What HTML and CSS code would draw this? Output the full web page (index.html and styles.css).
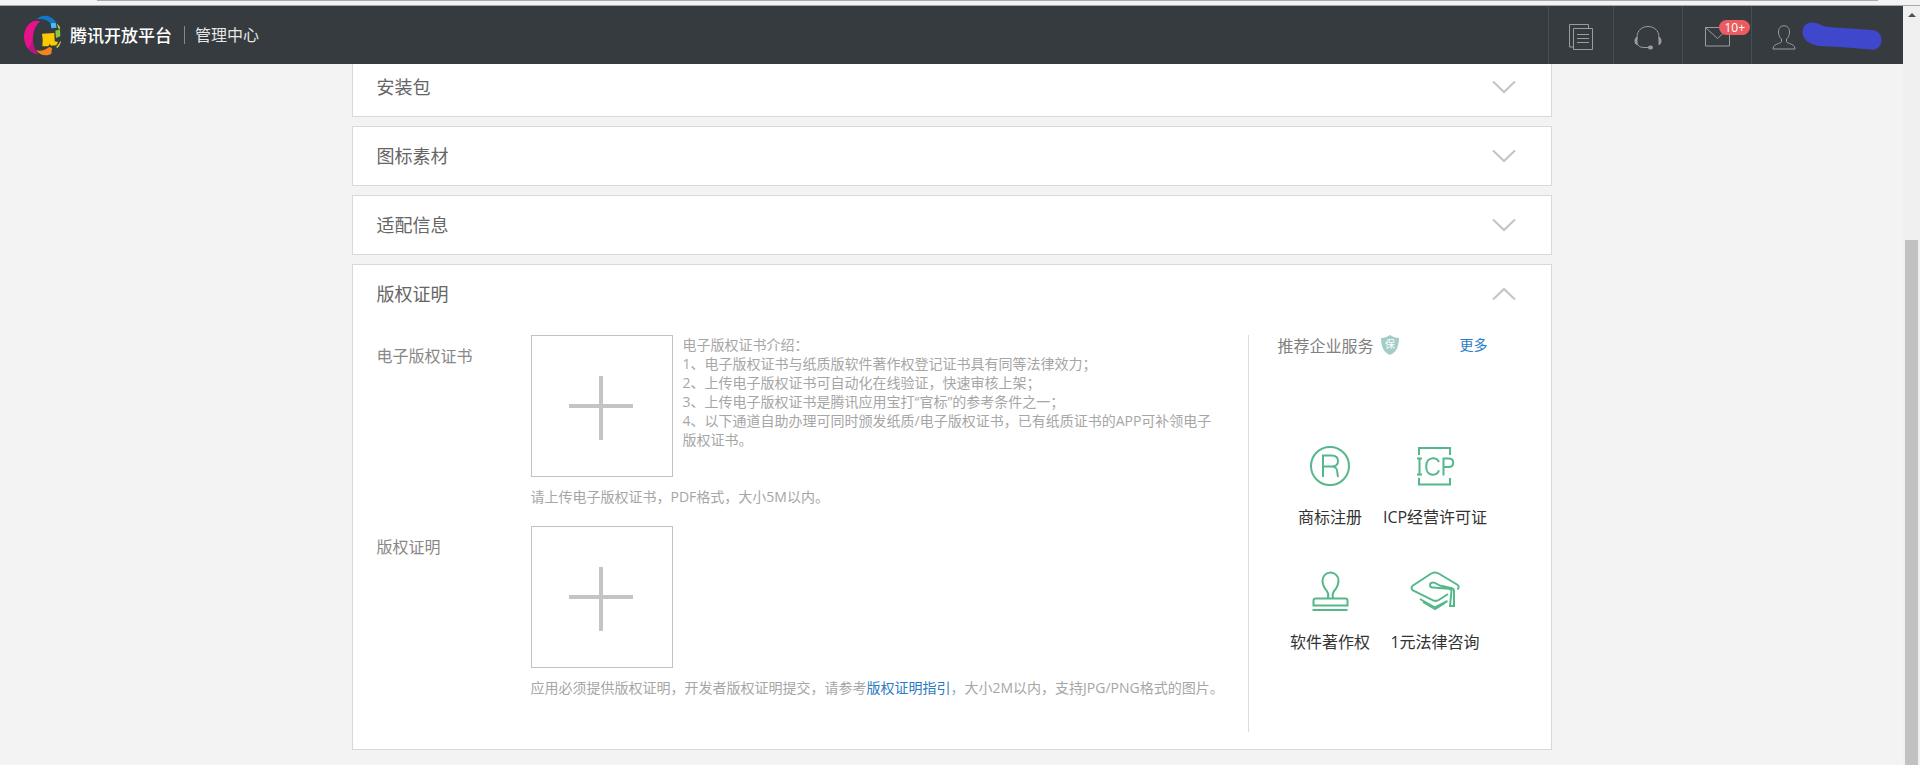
FILE: index.html
```html
<!DOCTYPE html>
<html lang="zh-CN">
<head>
<meta charset="utf-8">
<title>腾讯开放平台 管理中心</title>
<link rel="stylesheet" href="styles.css">
</head>
<body>
<div class="window-edge"></div>
<div class="viewport">
  <div class="page">
    <header class="topbar">
      <a class="brand" href="#">
        <svg class="brand-logo" viewBox="15 12 120 123" aria-hidden="true">
          <path fill="#e6128b" d="M67 31C40 22 18 48 18 78c1 28 17 47 42 53-11-14-16-34-15-53 1-20 9-36 22-47z"/>
          <path fill="#a3127c" d="M45 78c-1 19 4 39 15 53-12-3-22-8-29-17 6-8 11-20 14-36z" opacity=".6"/>
          <path fill="#1277c9" d="M57 24C74 8 100 12 114 34l-15 4C88 27 76 23 57 24z"/>
          <path fill="#45bdf5" d="M98 37l15-2 3 15-16 2z"/>
          <path fill="#8cc63f" d="M112 59l14-4 1 21-13 5z"/>
          <path fill="#d9d62b" d="M116 37q7 6 11 15l-5 2zM129 92q-4 14-12 20l-2-4q8-8 12-17z"/>
          <path fill="#fcc800" d="M72 68l37-2 1 25 10 2-5 10-16 1-4-5-4 7H73q3-18-1-38z"/>
          <path fill="#f58220" d="M54 118c16 3 28-1 40-10l8 3-2 17c-16 9-33 6-46-10z"/>
        </svg>
        <span class="brand-name">腾讯开放平台</span>
      </a>
      <a class="section-name" href="#">管理中心</a>
      <nav class="tools" aria-label="工具">
        <a class="tool tool-docs" href="#" aria-label="文档">
          <svg width="26" height="28" viewBox="0 0 26 28"><path d="M5.500 24H1.500V1.500h19V5M5.500 5.500h19v21h-19zM9 11.500h12M9 15.500h12M9 19.500h12"/></svg>
        </a>
        <a class="tool" href="#" aria-label="客服">
          <svg width="28" height="25" viewBox="0 0 28 25"><path d="M3 14V12C3 5.500 8 1.500 14 1.500S25 5.500 25 12v2M3 18c1 3 3 4.500 7 4.500h5"/><path class="solid" d="M3.500 12v8C1.500 20 .5 18 .5 16s1-4 3-4zM24.500 12v8c2 0 3-2 3-4s-1-4-3-4z"/><rect class="solid" x="14" y="20.500" width="5" height="4" rx="2"/></svg>
        </a>
        <a class="tool" href="#" aria-label="消息 10+">
          <svg width="25" height="20" viewBox="0 0 25 20"><path d="M.5.500h24v18.500H.5zM.5.500l12 11 12-11"/></svg>
          <span class="badge">10+</span>
        </a>
        <a class="tool tool-user" href="#" aria-label="用户">
          <svg width="24" height="25" viewBox="0 0 24 25"><path d="M12 .8c-3.600 0-5.500 2.400-5.500 6.200 0 3.500 1.200 5.500 3 7v2c0 1.500-1 1.800-3 2.500-3 1.200-5.500 2-5.500 5.500h22c0-3.500-2.500-4.300-5.500-5.500-2-.7-3-1-3-2.500v-2c1.800-1.500 3-3.500 3-7 0-3.800-1.900-6.200-5.500-6.200z"/></svg>
          <svg class="scribble" width="80" height="30" viewBox="0 0 80 30"><path d="M10 .5C4 .5.500 4.500.5 10c0 7 6 12 16 14l22 1 30 2.500c6 1 11-3 11-9 0-7-4-10-10-10.500L26 5C20 4 16 .5 10 .5z"/></svg>
        </a>
      </nav>
    </header>

    <main class="content">
      <section class="panel">
        <h2><button class="panel-head" type="button" aria-expanded="false">安装包<svg class="chevron" viewBox="0 0 24 14"><path d="M1 1.500l11 10.500L23 1.500"/></svg></button></h2>
      </section>
      <section class="panel">
        <h2><button class="panel-head" type="button" aria-expanded="false">图标素材<svg class="chevron" viewBox="0 0 24 14"><path d="M1 1.500l11 10.500L23 1.500"/></svg></button></h2>
      </section>
      <section class="panel">
        <h2><button class="panel-head" type="button" aria-expanded="false">适配信息<svg class="chevron" viewBox="0 0 24 14"><path d="M1 1.500l11 10.500L23 1.500"/></svg></button></h2>
      </section>
      <section class="panel">
        <h2><button class="panel-head" type="button" aria-expanded="true">版权证明<svg class="chevron" viewBox="0 0 24 14"><path d="M1 12.500L12 2l11 10.500"/></svg></button></h2>
        <div class="panel-body">
          <div class="fields">
            <div class="field">
              <span class="field-label" id="ecert">电子版权证书</span>
              <div class="field-main">
                <div class="upload-row">
                  <button class="upload" type="button" aria-labelledby="ecert"><svg width="72" height="72" viewBox="0 0 72 72"><path d="M3 34h64v4H3zM33 6h4v64h-4z"/></svg></button>
                  <div class="intro">
                    <p>电子版权证书介绍：</p>
                    <p>1、电子版权证书与纸质版软件著作权登记证书具有同等法律效力；</p>
                    <p>2、上传电子版权证书可自动化在线验证，快速审核上架；</p>
                    <p>3、上传电子版权证书是腾讯应用宝打“官标”的参考条件之一；</p>
                    <p>4、以下通道自助办理可同时颁发纸质/电子版权证书，已有纸质证书的APP可补领电子版权证书。</p>
                  </div>
                </div>
                <p class="hint">请上传电子版权证书，PDF格式，大小5M以内。</p>
              </div>
            </div>
            <div class="field">
              <span class="field-label" id="proof">版权证明</span>
              <div class="field-main">
                <div class="upload-row">
                  <button class="upload" type="button" aria-labelledby="proof"><svg width="72" height="72" viewBox="0 0 72 72"><path d="M3 34h64v4H3zM33 6h4v64h-4z"/></svg></button>
                </div>
                <p class="hint">应用必须提供版权证明，开发者版权证明提交，请参考<a href="#">版权证明指引</a>，大小2M以内，支持JPG/PNG格式的图片。</p>
              </div>
            </div>
          </div>
          <aside class="services">
            <div class="services-head">
              <h3>推荐企业服务</h3>
              <svg class="shield" width="18" height="20" viewBox="0 0 18 20"><path d="M9 0c3 2 5.500 2.800 9 3-.2 8-2 14-9 17C2 17 .2 11 0 3c3.500-.2 6-1 9-3z"/><text x="9" y="13" text-anchor="middle">保</text></svg>
              <a class="more" href="#">更多</a>
            </div>
            <ul class="service-grid">
              <li><a href="#">
                <svg viewBox="0 0 52 42"><circle cx="26" cy="21" r="19"/><path d="M19 32V10.500h8.500c4 0 6.500 2 6.500 5.500s-2.500 5.500-6.500 5.500H19M27 21.500c4.500 0 6 1.500 6.300 5.500.2 2.500.2 4 1 5"/></svg>
                商标注册</a></li>
              <li><a href="#">
                <svg viewBox="0 0 52 42"><path d="M10 10V3h31v7M10 33v6.500h31V33M8 13.500h5M10.500 13.500v16M8 29.500h5M30 17c-1.200-2.700-3.200-3.800-6-3.800-4.200 0-6.800 3.300-6.800 8.300s2.600 8.300 6.800 8.300c3 0 5-1.500 6-4.500M34.500 30.500V13.500h5c3 0 4.700 1.600 4.700 4.300S42.500 22 39.500 22h-5"/></svg>
                ICP经营许可证</a></li>
              <li><a href="#">
                <svg viewBox="0 0 52 42"><path d="M24 28c1-3.500.5-5-1.500-7.500C20 17.500 18.500 14 18.500 10.500a8 8 0 0 1 16 0c0 3.500-1.500 7-4 10-2 2.500-2.500 4-1.500 7.500M11.500 28.500h30a2 2 0 0 1 2 2v5h-34v-5a2 2 0 0 1 2-2zM8.500 40h35"/></svg>
                软件著作权</a></li>
              <li><a href="#">
                <svg viewBox="0 0 52 42"><path d="M39 24l-8.500 5.500c-2.500 1.700-5.500 1.700-8 0L4 20.500c-2-1.500-2-3.500 0-5L21.500 4c3-2 6-2 9 0L48 14.500c2 1.200 2.200 3 .5 5M37 18.500l-13 -1c-4 0-4-5 0-5 3 0 4 2 7 3l12 2.800c1.500.5 2 1 2 2.500V36h-4l1.500-15c0-1.500-1-2-2.500-2.300zM11 29l15 8.500L38.500 31M14 32l12 7 10-6"/></svg>
                1元法律咨询</a></li>
            </ul>
          </aside>
        </div>
      </section>
    </main>
  </div>
  <div class="scrollbar" aria-hidden="true">
    <span class="scroll-arrow"></span>
    <span class="scroll-thumb"></span>
  </div>
</div>
</body>
</html>
```
FILE: styles.css
```css
* {
  box-sizing: border-box;
}

body {
  display: flex;
  flex-direction: column;
  min-height: 100vh;
  margin: 0;
  background: #f3f3f3;
  color: #333;
  font-family: "Open Sans", "Noto Sans CJK SC", sans-serif;
  font-size: 14px;
  line-height: 19px;
}

h2, h3, p, ul {
  margin: 0;
  padding: 0;
  font-size: inherit;
  font-weight: inherit;
}

ul {
  list-style: none;
}

a {
  color: #2b7cc4;
  text-decoration: none;
}

button {
  font: inherit;
  cursor: pointer;
}

svg {
  display: block;
  flex: none;
}

.window-edge {
  height: 6px;
  border-bottom: 1px solid #a9a9a9;
  background: linear-gradient(#a9a9a9, #a9a9a9) 97px 0 / calc(100% - 139px) 1px no-repeat #f3f3f3;
}

.viewport {
  display: flex;
  flex: 1;
}

.page {
  flex: 1;
  min-width: 0;
}

/* Top bar */

.topbar {
  position: relative;
  z-index: 1;
  display: flex;
  align-items: center;
  height: 58px;
  padding-left: 23px;
  background: #363b3f;
}

.brand {
  display: flex;
  align-items: center;
  gap: 7px;
  color: #fff;
  font-size: 17px;
  font-weight: 500;
}

.brand-logo {
  width: 40px;
  height: 41px;
}

.section-name {
  margin-left: 12px;
  padding-left: 10px;
  border-left: 1px solid #85898c;
  color: #e6e6e6;
  font-size: 16px;
  line-height: 18px;
}

.tools {
  display: flex;
  align-self: stretch;
  margin-left: auto;
}

.tool {
  position: relative;
  display: flex;
  align-items: center;
  justify-content: center;
  width: 69px;
  padding-top: 4px;
  border-left: 1px solid #484d51;
}

.tool-docs {
  width: 65px;
}

.tool-user {
  justify-content: flex-start;
  gap: 6px;
  width: 152px;
  padding-left: 20px;
}

.tool svg {
  fill: none;
  stroke: #9a9da0;
}

.tool .solid {
  fill: #9a9da0;
  stroke: none;
}

.tool .scribble {
  fill: #3f48cc;
  stroke: none;
}

.badge {
  position: absolute;
  top: 14px;
  right: 1px;
  padding: 0 5px;
  border-radius: 8px;
  background: #ec5b60;
  color: #fff;
  font-size: 12px;
  line-height: 15px;
}

/* Panels */

.content {
  display: flex;
  flex-direction: column;
  gap: 9px;
  max-width: 1200px;
  margin: -7px auto 15px;
}

.panel {
  border: 1px solid #d9d9d9;
  background: #fff;
}

.panel-head {
  display: flex;
  align-items: center;
  justify-content: space-between;
  width: 100%;
  height: 58px;
  padding: 0 35px 0 24px;
  border: 0;
  background: none;
  color: #666;
  font-size: 18px;
}

.chevron {
  width: 24px;
  height: 14px;
  fill: none;
  stroke: #c4c4c4;
  stroke-width: 2;
}

.panel-body {
  display: flex;
  padding: 12px 63px 17px 24px;
}

.fields {
  display: flex;
  flex: 1;
  flex-direction: column;
  gap: 20px;
}

.field {
  display: flex;
}

.field-label {
  flex: none;
  width: 154px;
  padding-top: 10px;
  color: #888;
  font-size: 16px;
  line-height: 22px;
}

.field-main {
  flex: 1;
  color: #a6a6a6;
}

.upload-row {
  display: flex;
  gap: 10px;
}

.upload {
  display: grid;
  flex: none;
  place-items: center;
  width: 142px;
  height: 142px;
  padding: 0;
  border: 1px solid #c2c2c2;
  background: #fff;
}

.upload svg {
  fill: #c4c4c4;
}

.intro {
  padding-right: 29px;
}

.hint {
  margin-top: 10px;
}

/* Recommended services */

.services {
  width: 240px;
  min-height: 397px;
  padding-left: 29px;
  border-left: 1px solid #dcdcdc;
}

.services-head {
  display: flex;
  align-items: flex-start;
}

.services-head h3 {
  color: #808080;
  font-size: 16px;
  line-height: 22px;
}

.shield {
  margin-left: 7px;
  fill: #a3cdc9;
}

.shield text {
  fill: #fff;
  font-size: 10px;
}

.more {
  margin-left: auto;
}

.service-grid {
  display: grid;
  grid-template-columns: 1fr 1fr;
  row-gap: 42px;
  margin-top: 88px;
}

.service-grid a {
  display: flex;
  flex-direction: column;
  align-items: center;
  gap: 19px;
  color: #333;
  font-size: 16px;
  line-height: 22px;
  white-space: nowrap;
}

.service-grid svg {
  width: 52px;
  height: 42px;
  fill: none;
  stroke: #55b88a;
  stroke-width: 2;
}

/* Scrollbar */

.scrollbar {
  display: flex;
  flex-direction: column;
  align-items: center;
  width: 17px;
  background: #f0f0f0;
}

.scroll-arrow {
  margin: 7px 0 223px;
  border: 4px solid transparent;
  border-top: 0;
  border-bottom-color: #505050;
}

.scroll-thumb {
  flex: 1;
  width: 13px;
  background: #c1c1c1;
}
```
